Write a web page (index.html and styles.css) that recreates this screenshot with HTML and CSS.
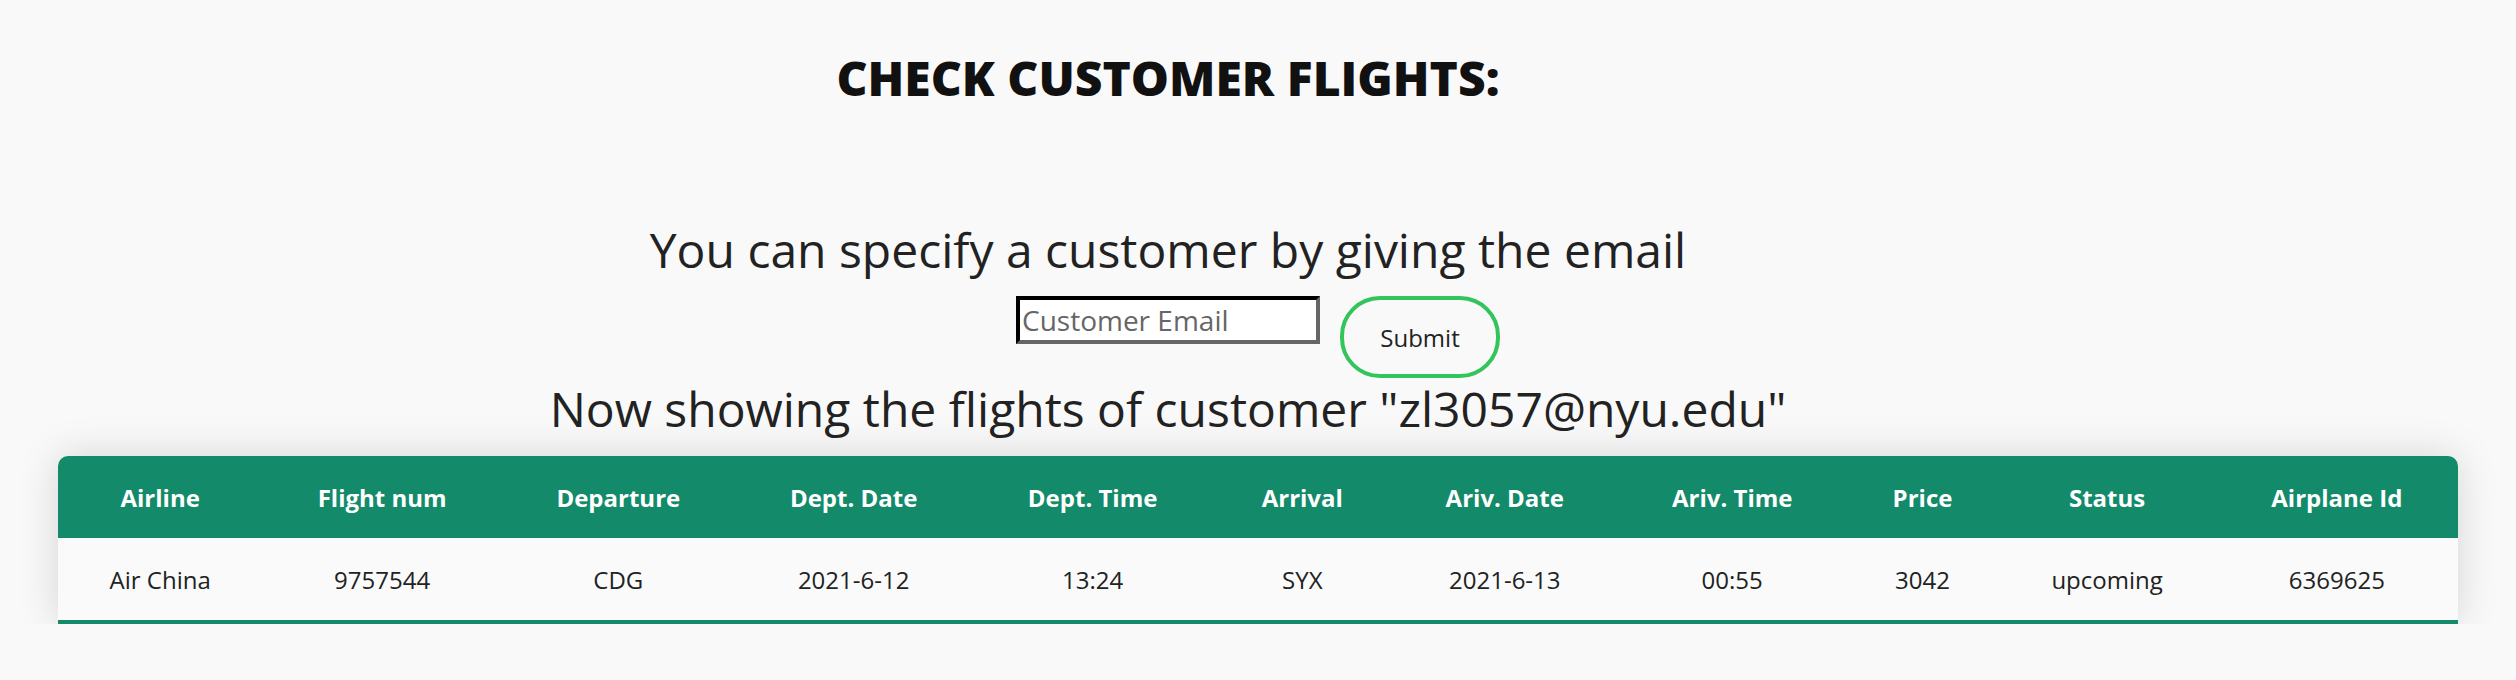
FILE: index.html
```html
<!DOCTYPE html>
<html lang="en">
<head>
<meta charset="utf-8">
<title>Check Customer Flights</title>
<link rel="stylesheet" href="styles.css">
</head>
<body>
<h1 class="title">CHECK CUSTOMER FLIGHTS:</h1>
<p class="lead lead-top">You can specify a customer by giving the email</p>
<form class="search">
  <input class="email" type="text" placeholder="Customer Email">
  <button class="submit" type="button">Submit</button>
</form>
<p class="lead lead-now">Now showing the flights of customer "zl3057@nyu.edu"</p>
<div class="table-card">
  <table class="flights">
    <thead>
      <tr>
        <th>Airline</th>
        <th>Flight num</th>
        <th>Departure</th>
        <th>Dept. Date</th>
        <th>Dept. Time</th>
        <th>Arrival</th>
        <th>Ariv. Date</th>
        <th>Ariv. Time</th>
        <th>Price</th>
        <th>Status</th>
        <th>Airplane Id</th>
      </tr>
    </thead>
    <tbody>
      <tr>
        <td>Air China</td>
        <td>9757544</td>
        <td>CDG</td>
        <td>2021-6-12</td>
        <td>13:24</td>
        <td>SYX</td>
        <td>2021-6-13</td>
        <td>00:55</td>
        <td>3042</td>
        <td>upcoming</td>
        <td>6369625</td>
      </tr>
    </tbody>
  </table>
</div>
</body>
</html>
```

FILE: styles.css
```css
html, body {
  margin: 0;
  padding: 0;
}

body {
  background: #f9f9f9;
  font-family: "Open Sans", "Liberation Sans", sans-serif;
  color: #222222;
}

.title {
  margin: 45px 0 0 0;
  padding-right: 180px;
  text-align: center;
  font-size: 48px;
  font-weight: 800;
  line-height: normal;
  color: #111111;
}

.lead {
  margin: 0;
  padding-right: 180px;
  text-align: center;
  font-size: 48px;
  font-weight: 400;
  line-height: normal;
  color: #222222;
}

.lead-top {
  margin-top: 107px;
}

.lead-now {
  margin-top: -2px;
}

.search {
  display: flex;
  justify-content: center;
  align-items: flex-start;
  gap: 20px;
  margin-top: 14px;
}

.email {
  box-sizing: border-box;
  width: 304px;
  height: 48px;
  padding: 1px 2px;
  border: 4px inset #767676;
  border-top-color: #111111;
  border-left-color: #111111;
  border-bottom-color: #666666;
  border-right-color: #666666;
  background: #ffffff;
  font-family: "Open Sans", "Liberation Sans", sans-serif;
  font-size: 28px;
  color: #222222;
  outline: none;
}

.email::placeholder {
  color: #666666;
}

.submit {
  box-sizing: border-box;
  width: 160px;
  height: 82px;
  padding: 0;
  border: 4px solid #33c45c;
  border-radius: 40px;
  background: transparent;
  font-family: "Open Sans", "Liberation Sans", sans-serif;
  font-size: 24px;
  color: #222222;
}

.table-card {
  width: 2400px;
  margin: 15px auto 0 auto;
  border-radius: 10px 10px 0 0;
  overflow: hidden;
  box-shadow: 0 0 40px rgba(0, 0, 0, 0.15);
}

.flights {
  width: 100%;
  border-collapse: collapse;
  font-size: 24px;
}

.flights th {
  background: #138a69;
  color: #ffffff;
  font-weight: 700;
  padding: 0 30px;
  height: 82px;
  text-align: center;
  white-space: nowrap;
}

.flights td {
  background: #fafafa;
  color: #222222;
  padding: 0 30px;
  height: 82px;
  text-align: center;
  white-space: nowrap;
  border-bottom: 4px solid #138a69;
}
```
